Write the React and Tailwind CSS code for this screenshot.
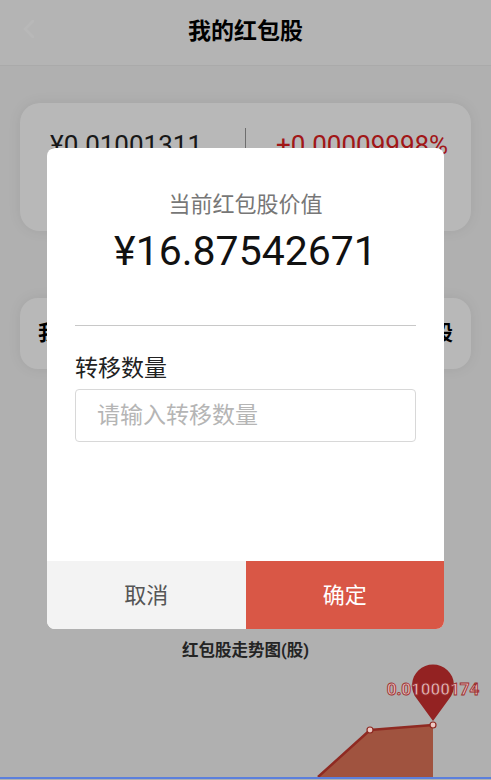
import { useState } from 'react';

const TrendChart = () => {
    return (
        <svg width="491" height="114" viewBox="0 0 491 114" className="relative z-20 block">
            {/* area */}
            <polygon points="318,114 370,67 433,62 433,114" fill="#a0533f" />
            <polyline points="318,114 370,67 433,62" fill="none" stroke="#8f2a22" strokeWidth="2.5" />
            <circle cx="370" cy="67" r="3" fill="#ecc9c4" stroke="#8f2a22" strokeWidth="1.2" />
            <circle cx="433" cy="62" r="3" fill="#ecc9c4" stroke="#8f2a22" strokeWidth="1.2" />
            {/* pin */}
            <path d="M433 58 L417 36 A21 21 0 1 1 449 36 Z" fill="#932222" />
            <text
                x="433"
                y="32"
                textAnchor="middle"
                fontSize="17"
                fontWeight="700"
                fontFamily="Roboto, sans-serif"
                fill="#e6bcbc"
                stroke="#9c2e2e"
                strokeWidth="0.9"
            >
                0.01000174
            </text>
        </svg>
    );
};

const App = () => {
    const [amount, setAmount] = useState('');

    return (
        <div
            className="relative h-[780px] w-full overflow-hidden bg-[#f4f4f4]"
            style={{ fontFamily: 'Roboto, "Noto Sans CJK SC", sans-serif' }}
        >
            {/* Header */}
            <div className="relative flex h-[66px] items-center justify-center border-b border-[#ececec] bg-[#fafafa]">
                <svg className="absolute left-[20px] top-[18px]" width="18" height="22" viewBox="0 0 18 22">
                    <path d="M13 3 L5 11 L13 19" fill="none" stroke="#ffffff" strokeWidth="2.5" strokeLinecap="round" />
                </svg>
                <h1 className="text-[23px] font-bold text-black">我的红包股</h1>
            </div>

            <div className="flex flex-col px-5 pt-[37px]">
                {/* Price card */}
                <div className="flex h-[128px] rounded-[20px] bg-white pt-[24px] shadow-[0_0_14px_rgba(0,0,0,0.07)]">
                    <div className="flex h-[36px] w-full items-center">
                        <div className="flex-1 pl-[30px] text-[26px] leading-none text-[#222]">¥0.01001311</div>
                        <div className="h-[34px] w-px bg-[#999]" />
                        <div className="flex-1 pl-[30px] text-[26px] leading-none text-[#e0201f]">+0.00009998%</div>
                    </div>
                </div>

                {/* Holding card */}
                <div className="mt-[67px] flex h-[71px] items-center justify-between rounded-[18px] bg-white px-[18px] shadow-[0_0_14px_rgba(0,0,0,0.07)]">
                    <span className="text-[21px] font-bold text-black">我的红包股</span>
                    <span className="text-[21px] font-bold text-black">1685.4股</span>
                </div>
            </div>

            {/* Chart */}
            <div className="mt-[270px] flex h-[24px] items-center justify-center text-[16.5px] font-bold text-[#333]">
                红包股走势图(股)
            </div>
            <TrendChart />
            <div className="relative z-20 h-[2px] w-full bg-[#5b7fdc]" />

            {/* Mask */}
            <div className="absolute inset-0 z-10 bg-black/[0.28]" />

            {/* Transfer dialog */}
            <div className="absolute left-[47px] top-[148px] z-30 flex h-[481px] w-[397px] flex-col overflow-hidden rounded-lg bg-white">
                <div className="flex flex-1 flex-col px-[28px] pt-[42px]">
                    <p className="h-[30px] text-center text-[22px] leading-[30px] text-[#777]">当前红包股价值</p>
                    <p className="mt-[6px] h-[50px] text-center text-[41px] leading-[50px] text-[#111]">¥16.87542671</p>
                    <div className="mt-[49px] h-px bg-[#c8c8c8]" />
                    <p className="mt-[27px] h-[32px] text-[23px] leading-[32px] text-[#222]">转移数量</p>
                    <input
                        value={amount}
                        onChange={(e) => setAmount(e.target.value)}
                        placeholder="请输入转移数量"
                        className="mt-[4px] h-[53px] w-full rounded border border-[#d8d8d8] px-[21px] text-[23px] text-[#222] outline-none placeholder:text-[#b5b5b5]"
                    />
                </div>
                <div className="flex h-[68px]">
                    <button className="flex-1 bg-[#f3f3f3] text-[22px] text-[#555]">取消</button>
                    <button className="flex-1 bg-[#d95746] text-[22px] text-white">确定</button>
                </div>
            </div>
        </div>
    );
};

export default App;
